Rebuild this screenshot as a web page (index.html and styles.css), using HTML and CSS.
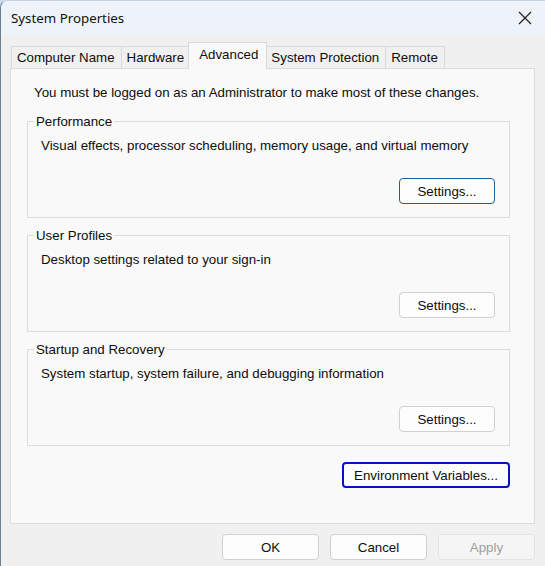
FILE: index.html
```html
<!DOCTYPE html>
<html>
<head>
<meta charset="utf-8">
<link rel="stylesheet" href="styles.css">
</head>
<body>
<div class="window">
  <div class="titlebar">
    <span class="title">System Properties</span>
    <svg class="close" width="14" height="14" viewBox="0 0 14 14"><path d="M1 1 L13 13 M13 1 L1 13" stroke="#1a1a1a" stroke-width="1.1" fill="none"/></svg>
  </div>
  <div class="body">
    <div class="tabs">
      <div class="tab">Computer Name</div>
      <div class="tab">Hardware</div>
      <div class="tab active">Advanced</div>
      <div class="tab">System Protection</div>
      <div class="tab">Remote</div>
    </div>
    <div class="panel">
      <p class="note">You must be logged on as an Administrator to make most of these changes.</p>
      <fieldset class="group">
        <legend>Performance</legend>
        <p class="desc">Visual effects, processor scheduling, memory usage, and virtual memory</p>
        <div class="row"><button class="btn focus">Settings...</button></div>
      </fieldset>
      <fieldset class="group">
        <legend>User Profiles</legend>
        <p class="desc">Desktop settings related to your sign-in</p>
        <div class="row"><button class="btn">Settings...</button></div>
      </fieldset>
      <fieldset class="group">
        <legend>Startup and Recovery</legend>
        <p class="desc">System startup, system failure, and debugging information</p>
        <div class="row"><button class="btn">Settings...</button></div>
      </fieldset>
      <div class="env-row"><button class="btn env">Environment Variables...</button></div>
    </div>
    <div class="actions">
      <button class="btn action">OK</button>
      <button class="btn action">Cancel</button>
      <button class="btn action disabled">Apply</button>
    </div>
  </div>
</div>
</body>
</html>
```
FILE: styles.css
```css
html, body {
  margin: 0;
  padding: 0;
}
body {
  background: #c9dbee;
  width: 545px;
  height: 566px;
  overflow: hidden;
  font-family: "Liberation Sans", Arial, sans-serif;
  font-size: 13.3px;
  color: #0d0d0d;
}
.window {
  width: 560px;
  height: 580px;
  background: #f0f0f0;
  border-left: 1px solid #6e7e92;
  border-top: 1px solid #c4d2e2;
  border-radius: 8px 8px 0 0;
  overflow: hidden;
}
.titlebar {
  height: 35px;
  background: #eef3f9;
  display: flex;
  align-items: center;
  padding-left: 10px;
  box-sizing: border-box;
  width: 544px;
}
.title {
  font-family: "Noto Sans", sans-serif;
  font-size: 13.3px;
  color: #111;
  flex: 1;
  padding-bottom: 2px;
}
.close {
  margin-right: 13px;
  margin-top: -2px;
}
.body {
  padding: 10px 0 0 9px;
}
.tabs {
  display: flex;
  align-items: flex-end;
  height: 22px;
  padding-left: 1px;
  position: relative;
  z-index: 1;
}
.tab {
  height: 21px;
  line-height: 21px;
  padding: 0 6px 0 5px;
  background: #f0f0f0;
  border: 1px solid #dadada;
  border-bottom: none;
  margin-right: -1px;
  white-space: nowrap;
}
.tab.active {
  line-height: 23px;
  background: #f9f9f9;
  margin: 0 -2px -1px -2px;
  padding: 0 8px 0 10px;
  position: relative;
  z-index: 2;
  height: 26px;
}
.panel {
  width: 525px;
  height: 456px;
  box-sizing: border-box;
  background: #f9f9f9;
  border: 1px solid #dcdcdc;
  padding: 16px 24px 0 16px;
  display: flex;
  flex-direction: column;
}
.note {
  margin: 0 0 12px 7px;
  line-height: 16px;
}
.group {
  margin: 0 0 9px 0;
  padding: 0 14px 13px 13px;
  border: 1px solid #dcdcdc;
  min-width: 0;
}
.group legend {
  margin-left: -7px;
  padding: 0 2px;
  line-height: 17px;
}
.desc {
  margin: 8px 0 0 0;
  line-height: 16px;
}
.row {
  display: flex;
  justify-content: flex-end;
  margin-top: 24px;
}
.btn {
  font-family: "Liberation Sans", Arial, sans-serif;
  font-size: 13.3px;
  color: #0d0d0d;
  background: #fdfdfd;
  border: 1px solid #d0d0d0;
  border-radius: 4px;
  height: 26px;
  width: 96px;
  padding: 0;
  box-sizing: border-box;
}
.btn.focus {
  border-color: #1e5f94;
}
.env-row {
  display: flex;
  justify-content: flex-end;
  margin-top: 7px;
}
.btn.env {
  width: 168px;
  border: 2px solid #0a10c4;
  border-radius: 4px;
}
.actions {
  display: flex;
  gap: 11px;
  padding-left: 212px;
  margin-top: 10px;
}
.btn.action {
  width: 97px;
}
.btn.disabled {
  color: #a0a0a0;
  background: #f5f5f5;
  border-color: #e2e2e2;
}
```
